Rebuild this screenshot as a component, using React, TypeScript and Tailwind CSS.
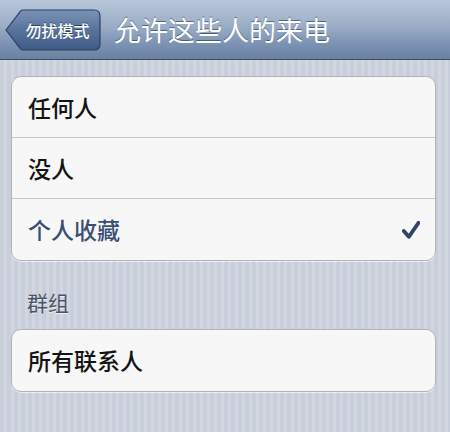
import React from "react";

const cjk = { fontFamily: '"Noto Sans CJK SC", "Noto Sans", sans-serif' };

function BackButton() {
  return (
    <div className="relative ml-[5px] h-[42px] w-[96px] shrink-0">
      <svg className="absolute inset-0" width="96" height="42" viewBox="0 0 96 42">
        <defs>
          <linearGradient id="backFill" x1="0" y1="0" x2="0" y2="1">
            <stop offset="0" stopColor="#7a93b6" />
            <stop offset="0.5" stopColor="#58739c" />
            <stop offset="1" stopColor="#3e5a86" />
          </linearGradient>
        </defs>
        <path
          d="M1 21 L15.5 2.2 Q16.5 1 18.5 1 L89 1 Q95 1 95 7 L95 35 Q95 41 89 41 L18.5 41 Q16.5 41 15.5 39.8 Z"
          fill="url(#backFill)"
          stroke="#2c4064"
          strokeWidth="1.2"
        />
      </svg>
      <span
        className="absolute inset-0 flex items-center justify-center pl-[9px] text-[16px] font-medium text-white [text-shadow:0_-1px_0_rgba(0,0,0,0.45)]"
        style={cjk}
      >
        勿扰模式
      </span>
    </div>
  );
}

function Row({ label, checked, last }: { label: string; checked?: boolean; last?: boolean }) {
  return (
    <div
      className={`flex h-[61px] items-center justify-between pl-[16px] pr-[14px] ${
        last ? "" : "border-b border-[#c3c6cc]"
      }`}
    >
      <span className={`text-[23px] font-medium ${checked ? "text-[#3a4f72]" : "text-[#141414]"}`} style={cjk}>
        {label}
      </span>
      {checked && (
        <svg width="18" height="18" viewBox="0 0 18 18" className="mr-[1px]">
          <path d="M1.8 10 L6.8 15.8 L16.5 1.8" fill="none" stroke="#33466a" strokeWidth="3.8" strokeLinecap="round" strokeLinejoin="round" />
        </svg>
      )}
    </div>
  );
}

export default function App() {
  return (
    <div className="h-[432px] w-[450px] overflow-hidden bg-[repeating-linear-gradient(90deg,#c9cfda_0px,#c9cfda_4px,#d1d6e0_4px,#d1d6e0_7px)]">
      <div className="flex h-[60px] items-center border-b border-[#3a4d6b] bg-[linear-gradient(180deg,#b8c6d9_0%,#9aacc6_45%,#7c92b2_75%,#6a81a2_100%)]">
        <BackButton />
        <h1
          className="ml-[13px] text-[27px] font-normal leading-none text-white [text-shadow:0_-1px_0_rgba(40,55,80,0.6)]"
          style={cjk}
        >
          允许这些人的来电
        </h1>
      </div>

      <div className="pl-[11px] pr-[14px] pt-[16px]">
        <div className="overflow-hidden rounded-[10px] border border-[#aeb3bc] bg-[#f7f7f7] shadow-[0_1px_0_rgba(255,255,255,0.6)]">
          <Row label="任何人" />
          <Row label="没人" />
          <Row label="个人收藏" checked last />
        </div>

        <div className="pl-[16px] pt-[25px] pb-[11px] text-[21px] font-normal leading-[32px] text-[#4b5466] [text-shadow:0_1px_0_rgba(255,255,255,0.7)]" style={cjk}>
          群组
        </div>

        <div className="overflow-hidden rounded-[10px] border border-[#aeb3bc] bg-[#f7f7f7] shadow-[0_1px_0_rgba(255,255,255,0.6)]">
          <Row label="所有联系人" last />
        </div>
      </div>
    </div>
  );
}
